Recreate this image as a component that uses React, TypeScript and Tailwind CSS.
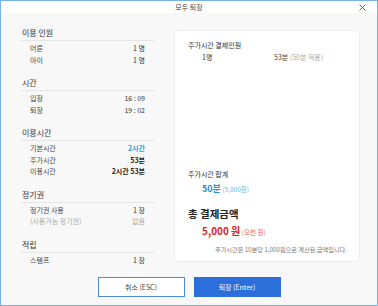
import React from "react";

const font = { fontFamily: '"Noto Sans CJK KR", "Noto Sans", sans-serif' };

function Row({ label, value, valueClass = "text-[#333]", labelClass = "text-[#444]" }: { label: string; value: React.ReactNode; valueClass?: string; labelClass?: string }) {
  return (
    <div className="flex justify-between items-center h-[11.5px] leading-[11.5px] pl-[10px] pr-[10px] text-[7px]">
      <span className={labelClass}>{label}</span>
      <span className={valueClass}>{value}</span>
    </div>
  );
}

function Section({ title, children, first = false }: { title: string; children: React.ReactNode; first?: boolean }) {
  return (
    <div className={first ? "" : "mt-[12px]"}>
      <div className="h-[11px] leading-[10px] pl-[2px] text-[8px] text-[#333] border-b border-[#e6e6e6] box-content pb-[1px]">{title}</div>
      <div className="pt-[2px]">{children}</div>
    </div>
  );
}

export default function App() {
  return (
    <div style={font} className="w-[378px] h-[306px] border border-[#7ab0ea] bg-[#f8f8f8] flex flex-col overflow-hidden">
      <div className="h-[12px] bg-white relative flex items-center justify-center">
        <span className="text-[7px] leading-[12px] text-[#444]">모두 퇴장</span>
        <svg className="absolute right-[11px] top-[3px]" width="7" height="7" viewBox="0 0 7 7">
          <path d="M0.5 0.5 L6.5 6.5 M6.5 0.5 L0.5 6.5" stroke="#555" strokeWidth="0.9" />
        </svg>
      </div>
      <div className="h-[255px] flex">
        <div className="w-[135px] ml-[19px] pt-[15px]">
          <Section title="이용 인원" first>
            <Row label="어른" value="1 명" />
            <Row label="아이" value="1 명" />
          </Section>
          <Section title="시간">
            <Row label="입장" value="16 : 09" />
            <Row label="퇴장" value="19 : 02" />
          </Section>
          <Section title="이용시간">
            <Row label="기본시간" value="2시간" valueClass="text-[#2aa3d8] font-bold" />
            <Row label="주가시간" value="53분" valueClass="text-[#222] font-bold" />
            <Row label="이용시간" value="2시간 53분" valueClass="text-[#222] font-bold" />
          </Section>
          <Section title="정기권">
            <Row label="정기권 사용" value="1 장" />
            <Row label="(사용가능 정기권)" value="없음" labelClass="text-[#aaa]" valueClass="text-[#aaa]" />
          </Section>
          <Section title="적립">
            <Row label="스탬프" value="1 장" />
          </Section>
        </div>
        <div className="ml-[19px] mt-[17px] w-[186px] h-[232px] bg-white border border-[#ececec] rounded-[4px] flex flex-col pl-[13px] pr-[12px]">
          <div className="pt-[9px] text-[7px] leading-[10px] text-[#333]">주가시간 결제인원</div>
          <div className="flex text-[7px] leading-[12px] mt-[1px]">
            <span className="pl-[14px] w-[86px] text-[#333]">1명</span>
            <span className="text-[#444]">53분 <span className="text-[#aaa]">(50분 적용)</span></span>
          </div>
          <div className="mt-auto text-[7px] leading-[10px] text-[#333]">주가시간 합계</div>
          <div className="pl-[14px] leading-[12px]">
            <span className="text-[9px] font-bold text-[#1e93cc]">50분</span>
            <span className="text-[6.5px] text-[#5bb8e6]"> (5,000원)</span>
          </div>
          <div className="mt-[12px] text-[10.5px] leading-[14px] font-bold text-[#222]">총 결제금액</div>
          <div className="pl-[14px] leading-[14px]">
            <span className="text-[10px] font-bold text-[#e02424]">5,000 원</span>
            <span className="text-[6.5px] text-[#e46060]"> (오천 원)</span>
          </div>
          <div className="mt-[6px] mb-[6px] text-right text-[6.2px] leading-[10px] text-[#777]">추가시간은 10분당 1,000원으로 계산된 금액입니다.</div>
        </div>
      </div>
      <div className="flex-1 flex justify-center gap-[9px] pt-[9px]">
        <button className="w-[87px] h-[20px] bg-white border border-[#4d89dc] text-[7px] text-[#444]">취소 (ESC)</button>
        <button className="w-[87px] h-[20px] bg-[#2c6fdb] border border-[#2c6fdb] text-[7px] text-white">퇴장 (Enter)</button>
      </div>
    </div>
  );
}
